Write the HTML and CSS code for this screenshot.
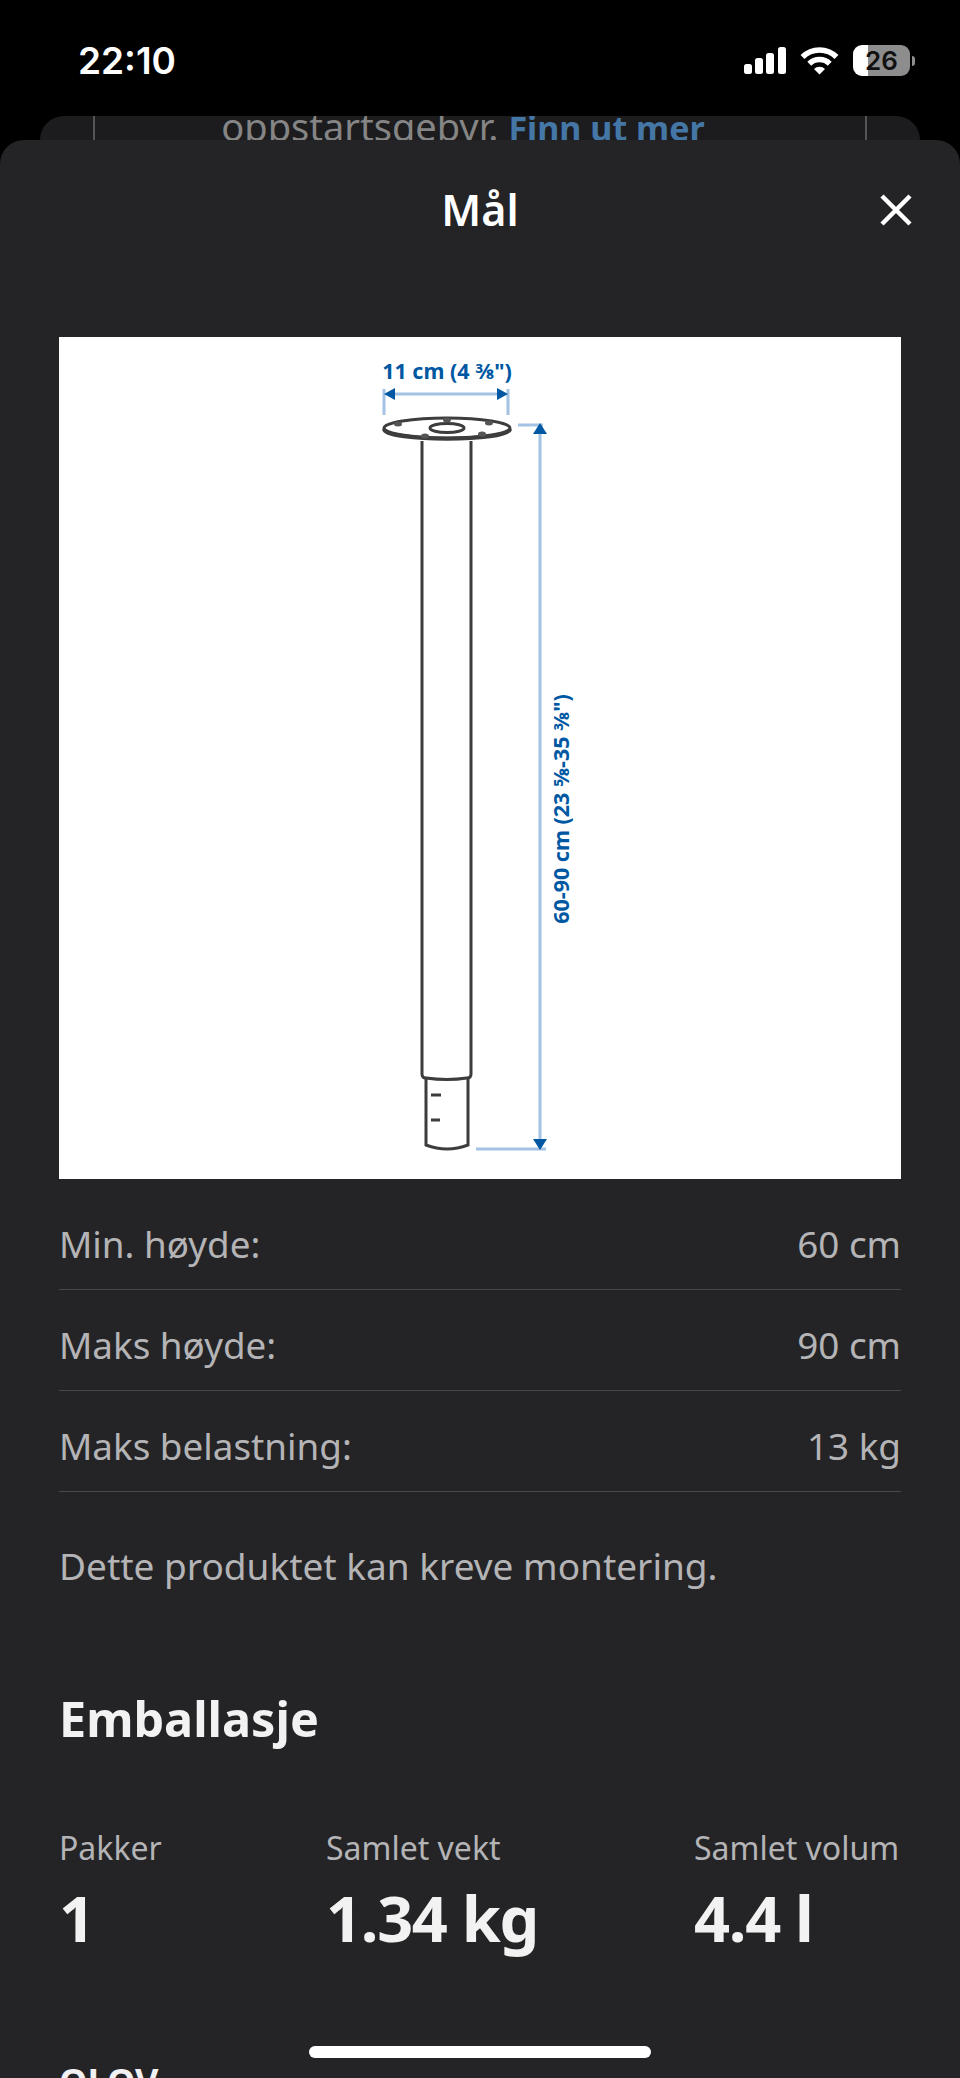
FILE: index.html
```html
<!DOCTYPE html>
<html lang="nb">
<head>
    <meta charset="UTF-8">
    <meta name="viewport" content="width=device-width, initial-scale=1.0">
    <title>Mål</title>
    <link rel="stylesheet" href="styles.css">
</head>
<body>
    <!-- Statuslinje -->
    <div class="status-bar">
        <span class="time">22:10</span>
        <div class="status-icons">
            <svg class="signal" width="42" height="27" viewBox="0 0 42 27">
                <rect x="0" y="17" width="8" height="10" rx="2.5"/>
                <rect x="11" y="11" width="8" height="16" rx="2.5"/>
                <rect x="22" y="6" width="8" height="21" rx="2.5"/>
                <rect x="34" y="0" width="8" height="27" rx="2.5"/>
            </svg>
            <svg class="wifi" width="39" height="28" viewBox="0 0 39 28">
                <path class="wifi-arc" d="M2.5 10 A24 24 0 0 1 36.5 10"/>
                <path class="wifi-arc" d="M9.25 16.75 A14.5 14.5 0 0 1 29.75 16.75"/>
                <path d="M19.5 27.5 L14 22 A7.8 7.8 0 0 1 25 22 Z" fill="#fff"/>
            </svg>
            <div class="battery"><span>26</span></div>
            <div class="battery-nub"></div>
        </div>
    </div>

    <!-- Siden bak arket -->
    <div class="page-behind">
        <p>oppstartsgebyr. <a href="#">Finn ut mer</a></p>
    </div>

    <!-- Ark med mål -->
    <div class="sheet">
        <header class="sheet-header">
            <span></span>
            <h1>Mål</h1>
            <svg class="close-icon" width="32" height="32" viewBox="0 0 32 32">
                <path d="M2 2 L30 30 M30 2 L2 30"/>
            </svg>
        </header>

        <div class="drawing">
            <svg viewBox="0 0 842 842" width="842" height="842">
                <!-- Bordben -->
                <g class="leg">
                    <ellipse cx="388" cy="91" rx="63" ry="10"/>
                    <path class="rim" d="M325 92 C326 105 450 105 451 92"/>
                    <ellipse cx="388" cy="91" rx="17" ry="4.5"/>
                    <path d="M363 104 L363 737 Q363 741 367 741 Q388 744 408 741 Q412 741 412 737 L412 104"/>
                    <path d="M367 742 L367 808 Q388 816 409 808 L409 742"/>
                    <path d="M372 758 L382 758 M372 783 L381 783"/>
                </g>
                <g class="holes">
                    <ellipse cx="339" cy="87" rx="4" ry="2.5"/>
                    <ellipse cx="388" cy="83" rx="4" ry="2.5"/>
                    <ellipse cx="430" cy="86" rx="4" ry="2.5"/>
                    <ellipse cx="423" cy="97" rx="4" ry="2.5"/>
                    <ellipse cx="366" cy="99" rx="4" ry="2.5"/>
                </g>
                <!-- Mållinjer -->
                <g class="dim-line">
                    <path d="M325 52 L325 78 M449 52 L449 78"/>
                    <path d="M330 57 L444 57"/>
                    <path d="M459 88 L484 88"/>
                    <path d="M481 92 L481 806"/>
                    <path d="M417 812 L487 812"/>
                </g>
                <g class="dim-arrow">
                    <path d="M325 57 L336 51 L336 63 Z"/>
                    <path d="M449 57 L438 51 L438 63 Z"/>
                    <path d="M481 86 L474 97 L488 97 Z"/>
                    <path d="M481 813 L474 802 L488 802 Z"/>
                </g>
                <text class="dim-text" x="388" y="42" text-anchor="middle">11 cm (4 ⅜")</text>
                <text class="dim-text" transform="translate(510 472) rotate(-90)" text-anchor="middle">60-90 cm (23 ⅝-35 ⅜")</text>
            </svg>
        </div>

        <div class="spec-list">
            <div class="spec-row"><span>Min. høyde:</span><span>60 cm</span></div>
            <div class="spec-row"><span>Maks høyde:</span><span>90 cm</span></div>
            <div class="spec-row"><span>Maks belastning:</span><span>13 kg</span></div>
        </div>

        <p class="note">Dette produktet kan kreve montering.</p>

        <h2 class="section-title">Emballasje</h2>

        <div class="stats">
            <div class="stat">
                <span class="stat-label">Pakker</span>
                <span class="stat-value">1</span>
            </div>
            <div class="stat">
                <span class="stat-label">Samlet vekt</span>
                <span class="stat-value">1.34 kg</span>
            </div>
            <div class="stat">
                <span class="stat-label">Samlet volum</span>
                <span class="stat-value">4.4 l</span>
            </div>
        </div>

        <h2 class="product-name">OLOV</h2>
    </div>

    <div class="home-indicator"></div>
</body>
</html>
```

FILE: styles.css
```css
body {
    margin: 0;
    height: 2078px;
    overflow: hidden;
    background-color: #000;
    font-family: "Noto Sans", sans-serif;
    position: relative;
}

.status-bar {
    height: 116px;
    box-sizing: border-box;
    padding: 38px 45px 0 78px;
    display: flex;
    justify-content: space-between;
    align-items: flex-start;
    color: #fff;
}

.time {
    font-family: Inter, sans-serif;
    font-size: 37px;
    font-weight: 600;
    line-height: 46px;
}

.status-icons {
    display: flex;
    align-items: center;
    margin-top: 7px;
}

.signal {
    fill: #fff;
    margin-right: 14px;
}

.wifi {
    margin-right: 14px;
}

.wifi-arc {
    fill: none;
    stroke: #fff;
    stroke-width: 5.5;
}

.battery {
    width: 57px;
    height: 31px;
    border-radius: 9px;
    background: linear-gradient(to right, #fff 15px, #8d8d8d 15px);
    display: flex;
    align-items: center;
    justify-content: center;
    font-family: Inter, sans-serif;
    font-size: 26px;
    font-weight: 600;
    color: #111;
}

.battery-nub {
    width: 3px;
    height: 10px;
    margin-left: 2px;
    border-radius: 0 3px 3px 0;
    background-color: #8d8d8d;
}

.page-behind {
    height: 24px;
    margin: 0 40px;
    box-sizing: border-box;
    padding: 0 53px;
    overflow: hidden;
    background-color: #1c1c1e;
    border-radius: 24px 24px 0 0;
}

.page-behind p {
    height: 24px;
    margin: 0;
    padding-right: 34px;
    border-left: 2px solid #555;
    border-right: 2px solid #555;
    text-align: center;
    font-size: 38px;
    line-height: 21px;
    color: #858585;
    white-space: nowrap;
}

.page-behind a {
    color: #4477a6;
    font-size: 34px;
    font-weight: 700;
    text-decoration: none;
}

.sheet {
    background-color: #242427;
    border-radius: 24px 24px 0 0;
    padding: 0 59px;
    height: 1938px;
    box-sizing: border-box;
    overflow: hidden;
}

.sheet-header {
    height: 140px;
    margin-bottom: 57px;
    display: grid;
    grid-template-columns: 1fr auto 1fr;
    align-items: center;
}

.sheet-header h1 {
    margin: -2px 0 0;
    font-size: 43px;
    font-weight: 600;
    color: #fff;
}

.close-icon {
    justify-self: end;
    margin-right: -11px;
}

.close-icon path {
    fill: none;
    stroke: #fff;
    stroke-width: 4.5;
}

.drawing {
    width: 842px;
    height: 842px;
    background-color: #fff;
}

.drawing svg {
    display: block;
}

.leg {
    fill: none;
    stroke: #3d3d3d;
    stroke-width: 3;
}

.leg .rim {
    stroke-width: 4;
}

.holes {
    fill: #555;
}

.dim-line {
    fill: none;
    stroke: #a3c2e4;
    stroke-width: 3;
}

.dim-arrow {
    fill: #0058a3;
}

.dim-text {
    font-size: 21.5px;
    font-weight: 700;
    fill: #0058a3;
}

.spec-list {
    margin-top: 10px;
}

.spec-row {
    height: 101px;
    box-sizing: border-box;
    padding-top: 9px;
    border-bottom: 1px solid #48484a;
    display: flex;
    justify-content: space-between;
    align-items: center;
    font-size: 36.8px;
    color: #b4b4b6;
}

.note {
    margin: 0;
    height: 146px;
    display: flex;
    align-items: center;
    font-size: 37px;
    color: #b4b4b6;
}

.section-title {
    margin: 0;
    padding-top: 47px;
    font-size: 48.5px;
    line-height: 66px;
    font-weight: 700;
    color: #f2f2f2;
}

.stats {
    margin-top: 75px;
    display: grid;
    grid-template-columns: 267px 368px auto;
}

.stat {
    display: flex;
    flex-direction: column;
}

.stat-label {
    font-size: 32px;
    line-height: 44px;
    color: #b4b4b6;
}

.stat-value {
    margin-top: 5px;
    font-size: 63px;
    line-height: 86px;
    font-weight: 700;
    letter-spacing: -1.3px;
    color: #f2f2f2;
}

.product-name {
    margin: 96px 0 0;
    font-size: 36px;
    line-height: 50px;
    font-weight: 700;
    color: #f2f2f2;
}

.home-indicator {
    position: absolute;
    left: 309px;
    top: 2046px;
    width: 342px;
    height: 12px;
    border-radius: 6px;
    background-color: #fff;
}
```
